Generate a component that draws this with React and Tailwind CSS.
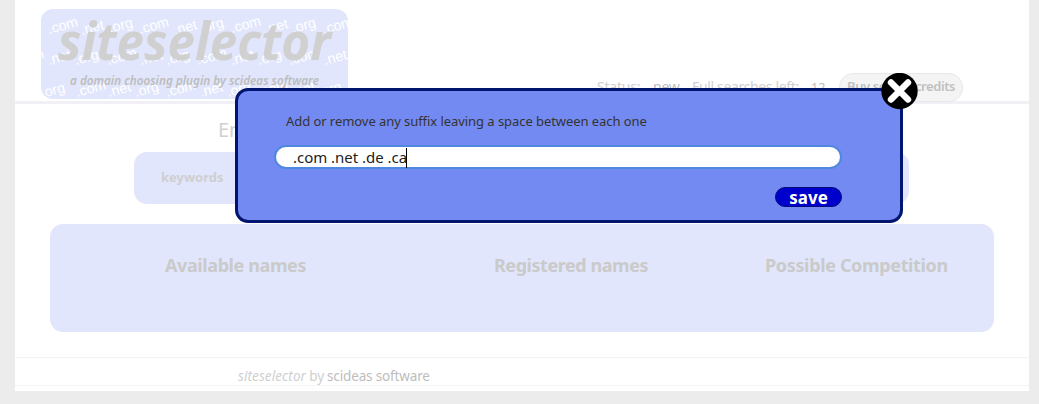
const domains = [
  [49, 34, ".com"], [82, 35, ".net"], [110, 33, ".org"], [140, 34, ".com"], [175, 35, ".net"], [201, 33, ".org"], [232, 33, ".com"], [266, 34, ".net"], [293, 33, ".org"], [324, 34, ".com"],
  [15, 66, ".com"], [49, 65, ".net"], [76, 65, ".org"], [108, 65, ".com"], [141, 65, ".net"], [167, 65, ".org"], [198, 65, ".com"], [232, 65, ".net"], [259, 65, ".org"], [290, 65, ".com"], [325, 65, ".net"],
  [46, 97, "org"], [77, 97, ".com"], [109, 97, ".net"], [136, 97, ".org"], [167, 97, ".com"], [201, 97, ".net"], [228, 97, ".org"], [259, 97, ".com"], [293, 97, ".net"], [319, 97, ".org"],
];

function Logo() {
  return (
    <svg className="block h-[90px] w-[307px] rounded-xl bg-[#e1e6fc]" viewBox="41 9 307 90">
      <g fill="#fff" fontFamily="Liberation Sans, sans-serif" fontSize="14.2">
        {domains.map(([x, y, word]) => (
          <text key={`${x}-${y}`} transform={`translate(${x} ${y}) rotate(-15)`}>{word}</text>
        ))}
      </g>
      <g fontFamily="Noto Sans, sans-serif" fontStyle="italic" fontWeight="700">
        <text x="58" y="60" fontSize="52" fill="#d0d0d0" textLength="273" lengthAdjust="spacingAndGlyphs">siteselector</text>
        <text x="70" y="85" fontSize="12" fontWeight="600" fill="#bdbdbd" textLength="249" lengthAdjust="spacingAndGlyphs">a domain choosing plugin by scideas software</text>
      </g>
    </svg>
  );
}

function CloseIcon() {
  return (
    <svg className="size-[37px]" viewBox="0 0 37 37">
      <circle cx="18.5" cy="18" r="18.2" fill="#000" />
      <path d="M10 9.5 27 26.5M27 9.5 10 26.5" stroke="#fff" strokeWidth="6.4" strokeLinecap="round" />
    </svg>
  );
}

function Header() {
  return (
    <header className="flex h-[104px] items-start justify-between border-b-[3px] border-[#f0f0f6] pt-[9px] pr-[66px] pl-[26px]">
      <Logo />
      <div className="mt-16 flex h-7 items-center text-sm leading-7 whitespace-nowrap text-[#cfcfcf]">
        <span className="w-14 tracking-[-0.2px]">Status:</span>
        <span className="w-[39px] tracking-[-0.2px] text-[#bdbdbd]">new</span>
        <span className="w-[119px] tracking-[-0.35px]">Full searches left:</span>
        <span className="w-7 pt-0.5 text-[12.5px] text-[#bdbdbd]">12</span>
        <button className="h-[29px] w-[124px] rounded-[14px] border border-[#e8e8e8] bg-[#f4f4f4] pb-1 text-[13px] leading-6 font-semibold tracking-[-0.42px] text-[#c0c0c0]">Buy search credits</button>
      </div>
    </header>
  );
}

function SuffixDialog() {
  return (
    <div role="dialog" className="absolute top-[88px] left-[235px] flex h-[135px] w-[668px] flex-col rounded-[13px] border-[3px] border-[#001570] bg-[#738af2] pr-[58px] pl-[37px] font-['Noto_Sans',sans-serif]">
      <label className="mt-5 ml-[11px] h-5 text-[13px] leading-5 tracking-[-0.06px] whitespace-nowrap text-[#333]">
        <span>Add or remove any suffix leaving a space between each one</span>
      </label>
      <div className="mt-[14px] -ml-px flex h-6 w-[568px] items-center rounded-[12px] border-2 border-[#5088e0] bg-white pt-px pl-[17px] text-[15px] whitespace-nowrap text-[#222]">
        <span className="tracking-[-0.02px]">.com .net .de .ca</span>
        <span className="-ml-px h-5 w-px bg-black" />
      </div>
      <button className="mt-[18px] ml-[500px] flex h-5 w-[67px] items-center justify-center rounded-[10px] border border-[#000c78] bg-[#0000cc] pt-0.5 text-[17px] leading-5 font-bold text-white">save</button>
      <button aria-label="Close" className="absolute -top-[18px] right-[-18px] size-[37px]">
        <CloseIcon />
      </button>
    </div>
  );
}

export default function App() {
  return (
    <div className="relative h-[404px] w-[1039px] overflow-hidden bg-[#ececec] pr-2.5 pl-[15px] font-['Noto_Sans',sans-serif]">
      <div className="flex h-[391px] flex-col bg-white">
        <Header />
        <h1 className="mt-3 ml-[203px] h-7 text-[20px] leading-7 text-[#d0d0d0]">Enter keywords</h1>
        <div className="mt-2 ml-[119px] flex h-[52px] w-[775px] items-center rounded-[13px] bg-[#e1e6fc] pl-[27px] text-[13px] font-bold text-[#cfcfcf]">
          <span>keywords</span>
        </div>
        <section className="mt-5 ml-[35px] flex h-[108px] w-[944px] rounded-[13px] bg-[#e1e6fc] pt-[27px] text-[18px] leading-7 font-bold whitespace-nowrap text-[#cacaca]">
          <h2 className="ml-[115px] w-[329px] tracking-[-0.4px]">Available names</h2>
          <h2 className="w-[271px] tracking-[-0.45px]">Registered names</h2>
          <h2 className="tracking-[-0.35px]">Possible Competition</h2>
        </section>
        <footer className="mt-[25px] flex h-[29px] items-center border-y border-[#f3f3f3] pt-2.5 pl-[223px] text-[13.5px] whitespace-pre text-[#cfcfcf]">
          <i className="tracking-[0.1px]">siteselector</i>
          <span className="tracking-[-0.25px]"> by </span>
          <span className="tracking-[-0.15px] text-[#bdbdbd]">scideas software</span>
        </footer>
      </div>
      <SuffixDialog />
    </div>
  );
}
